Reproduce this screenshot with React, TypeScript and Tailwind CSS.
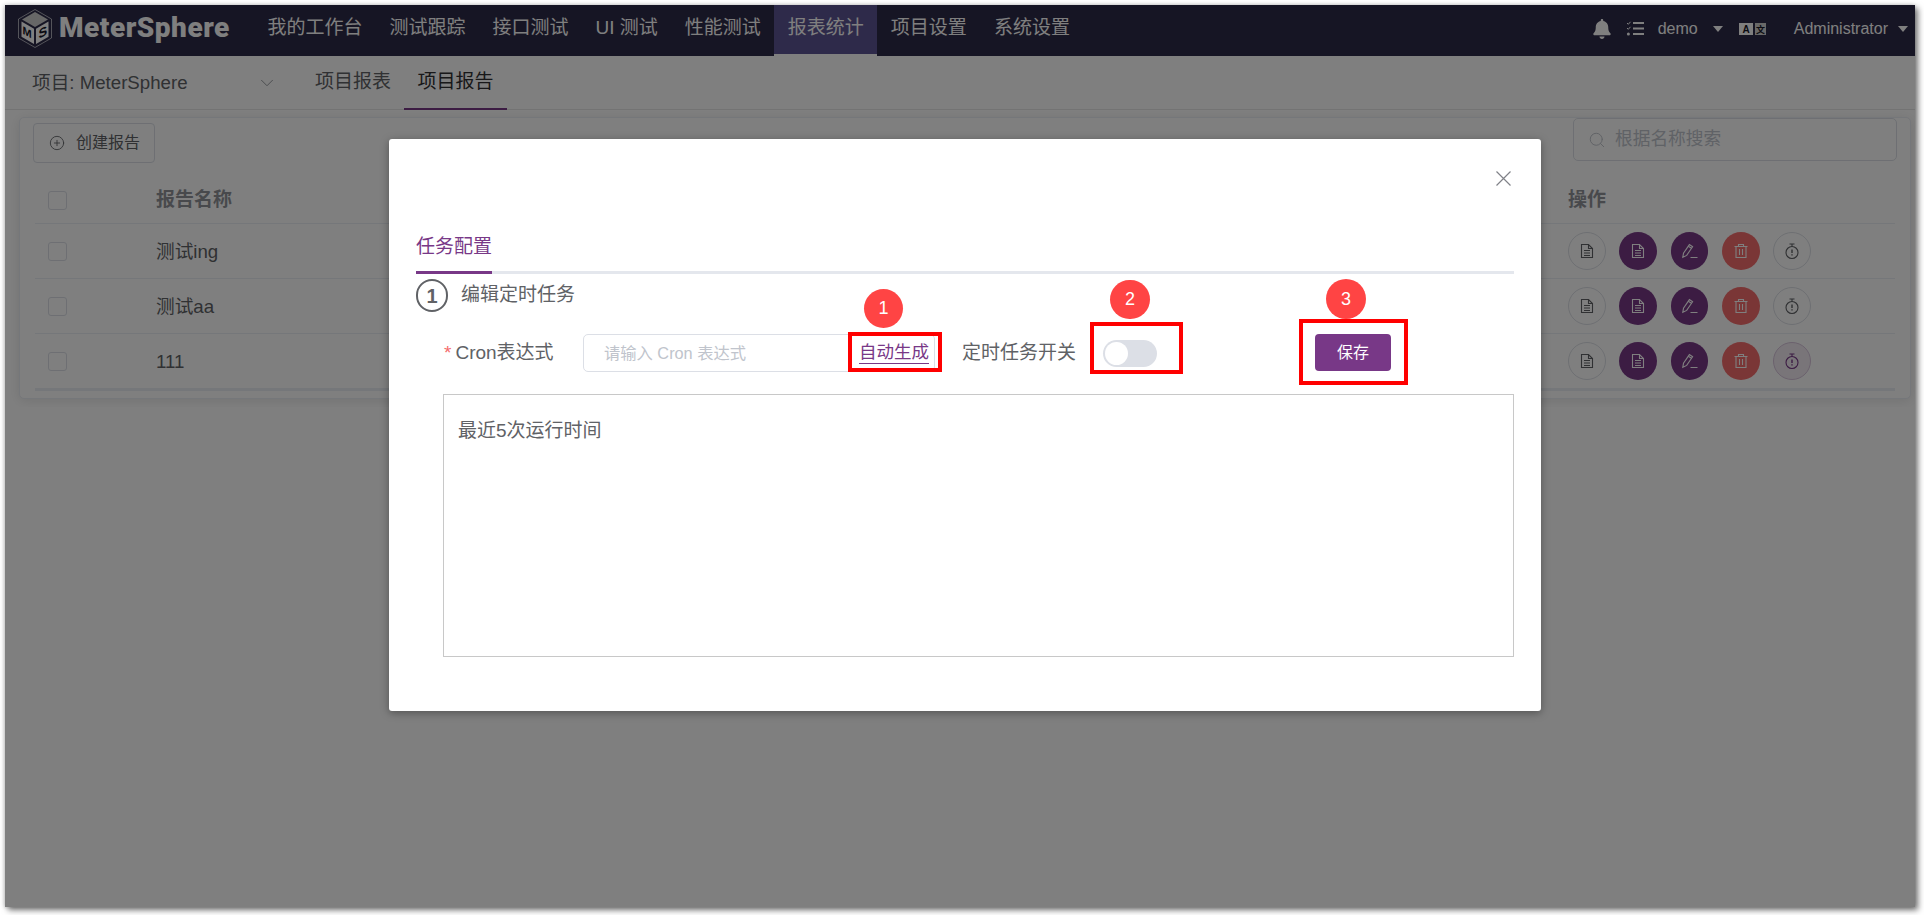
import { ChevronDown, CirclePlus, Search } from "lucide-react";
import { FaBell } from "react-icons/fa";

const NAV_ITEMS = ["我的工作台", "测试跟踪", "接口测试", "UI 测试", "性能测试", "报表统计", "项目设置", "系统设置"];
const ROWS = ["测试ing", "测试aa", "111"];
const FONT = "font-['Liberation_Sans','Noto_Sans_CJK_SC',sans-serif]";

function Logo() {
  return (
    <svg width="34" height="39" viewBox="0 0 34 39" className="shrink-0">
      <polygon points="17,0.5 33.5,10 33.5,29 17,38.5 0.5,29 0.5,10" fill="none" stroke="#ffffff" strokeWidth="0.6" />
      <polygon points="17,3 30,10.5 17,18 4,10.5" fill="#cfcfcf" />
      <polygon points="3.5,12.5 16,19.7 16,35 3.5,27.8" fill="#ffffff" />
      <polygon points="18,19.7 30.5,12.5 30.5,27.8 18,35" fill="#ffffff" />
      <text
        transform="matrix(1 0.55 0 1 4.6 24.5)"
        fontSize="11"
        fontWeight="900"
        fontFamily="Liberation Sans"
        fill="#161524"
      >
        M
      </text>
      <text
        transform="matrix(1 -0.55 0 1 20.5 30)"
        fontSize="13"
        fontWeight="900"
        fontFamily="Liberation Sans"
        fill="#161524"
      >
        S
      </text>
    </svg>
  );
}

function TasksIcon() {
  return (
    <svg width="18" height="15" viewBox="0 0 18 15" fill="none" stroke="#ffffff" className="shrink-0">
      <path d="M1 2l1.3 1.3L4.5 .8M1 7l1.3 1.3L4.5 5.8" strokeWidth="1" />
      <circle cx="2.4" cy="13" r="1.5" fill="#ffffff" stroke="none" />
      <path d="M7 2h11M7 7.5h11M7 13h11" strokeWidth="2" />
    </svg>
  );
}

function LangIcon() {
  return (
    <svg width="27" height="12" viewBox="0 0 27 12" className="shrink-0">
      <rect width="14" height="12" fill="#ffffff" />
      <rect x="16" width="11" height="12" fill="#d0d0d0" />
      <text x="7" y="10" textAnchor="middle" fontSize="10" fontWeight="700" fontFamily="Liberation Sans" fill="#161524">
        A
      </text>
      <text x="21.5" y="9.7" textAnchor="middle" fontSize="9" fontFamily="Noto Sans CJK SC" fontWeight="700" fill="#161524">
        文
      </text>
    </svg>
  );
}

function Caret() {
  return <span className="h-0 w-0 shrink-0 border-x-[5px] border-t-[6px] border-x-transparent border-t-white" />;
}

function DocIcon() {
  return (
    <svg width="16" height="16" viewBox="0 0 16 16" fill="none" stroke="currentColor" strokeWidth="1.1">
      <path d="M2.5 1.5h7l4 4v9h-11z" />
      <path d="M9.5 1.5v4h4M5 7.5h6M5 10h6M5 12.5h6" />
    </svg>
  );
}

function EditIcon() {
  return (
    <svg width="18" height="16" viewBox="0 0 18 16" fill="none" stroke="currentColor" strokeWidth="1.1">
      <path d="M1.8 14.2l.7-3.9L8.4 1.6l3.2 2.1-5.9 8.7z" />
      <path d="M7.3 3.2l3.2 2.1M9.5 14.5h7" />
    </svg>
  );
}

function TrashIcon() {
  return (
    <svg width="16" height="16" viewBox="0 0 16 16" fill="none" stroke="currentColor" strokeWidth="1.1">
      <path d="M1.5 3.5h13M5.5 3.5v-2h5v2M3 3.5v11h10v-11M6.5 6v6M9.5 6v6" />
    </svg>
  );
}

function TimerIcon() {
  return (
    <svg width="16" height="17" viewBox="0 0 16 17" fill="none" stroke="currentColor" strokeWidth="1.1">
      <circle cx="8" cy="9.5" r="6" />
      <path d="M5.5 1h5M8 1v2.5" />
      <path d="M8 6.5v3.5M8 11.2v1.4" strokeWidth="1.4" />
    </svg>
  );
}

function ActionButtons({ hovered }: { hovered: boolean }) {
  return (
    <div className="flex w-[327px] items-center">
      <span className="flex h-[38px] w-[38px] items-center justify-center rounded-full border border-[#dcdfe6] bg-white text-[#606266]">
        <DocIcon />
      </span>
      <span className="ml-[13px] flex h-[38px] w-[38px] items-center justify-center rounded-full bg-[#783887] text-white">
        <DocIcon />
      </span>
      <span className="ml-[14px] flex h-[38px] w-[37px] items-center justify-center rounded-full bg-[#783887] text-white">
        <EditIcon />
      </span>
      <span className="ml-[14px] flex h-[38px] w-[38px] items-center justify-center rounded-full bg-[#f56c6c] text-white">
        <TrashIcon />
      </span>
      {hovered ? (
        <span className="ml-[13px] flex h-[38px] w-[38px] items-center justify-center rounded-full border border-[#d7c3db] bg-[#f2ebf3] text-[#783887]">
          <TimerIcon />
        </span>
      ) : (
        <span className="ml-[13px] flex h-[38px] w-[38px] items-center justify-center rounded-full border border-[#dcdfe6] bg-white text-[#606266]">
          <TimerIcon />
        </span>
      )}
    </div>
  );
}

function Checkbox() {
  return <span className="block h-[19px] w-[19px] shrink-0 rounded-[3px] border border-[#dcdfe6] bg-white" />;
}

function TopNav() {
  return (
    <div className="flex h-[51px] shrink-0 bg-[#2c2a48] text-white">
      <div className="flex w-[249px] shrink-0 items-center gap-[7px] pb-[5px] pl-[13px]">
        <Logo />
        <span className="font-['Roboto',sans-serif] text-[28px] leading-none font-black tracking-[0.5px]">MeterSphere</span>
      </div>
      {NAV_ITEMS.map((item) =>
        item === "报表统计" ? (
          <div key={item} className="flex items-center border-b-2 border-white bg-[#5c5494] px-[13.5px] pb-[2px] text-[19px]">
            {item}
          </div>
        ) : (
          <div key={item} className="flex items-center px-[13.5px] pb-[4px] text-[19px]">
            {item}
          </div>
        ),
      )}
      <div className="ml-auto flex items-center pr-[7px] pb-[4px] text-base">
        <FaBell size={20} className="shrink-0" />
        <span className="ml-[14px] flex">
          <TasksIcon />
        </span>
        <span className="ml-[14px]">demo</span>
        <span className="ml-[15px] flex">
          <Caret />
        </span>
        <span className="ml-[16px] flex">
          <LangIcon />
        </span>
        <span className="ml-[28px]">Administrator</span>
        <span className="ml-[10px] flex">
          <Caret />
        </span>
      </div>
    </div>
  );
}

function SubNav() {
  return (
    <div className="flex h-[54px] shrink-0 items-stretch border-b border-[#e6e6e6] bg-white text-[19px] text-[#606266]">
      <div className="flex w-[297px] items-center pl-[27px]">
        <span className="text-[18.67px]">项目: MeterSphere</span>
        <ChevronDown size={22} strokeWidth={1} className="mr-[24px] ml-auto text-[#909399]" />
      </div>
      <div className="flex items-center px-[13px]">项目报表</div>
      <div className="-mb-px flex items-center border-b-2 border-[#783887] px-[13.5px] text-[#303133]">项目报告</div>
    </div>
  );
}

function ReportCard() {
  return (
    <div className="min-h-0 flex-1">
      <div className="h-[297px] overflow-hidden pt-[7px] pr-[4px] pb-[8px] pl-[14px]">
        <div className="h-[282px] rounded-[5px] border border-[#ebeef5] bg-white shadow-[0_2px_12px_0_rgba(0,0,0,0.1)]">
          <div className="flex h-[45px] justify-between pr-[13px] pl-[13px]">
            <button className="mt-[5px] flex h-[40px] w-[122px] items-center rounded-[4px] border border-[#dcdfe6] pl-[15px] text-base text-[#606266]">
              <CirclePlus size={16} strokeWidth={1.3} />
              <span className="ml-[11px]">创建报告</span>
            </button>
            <div className="flex h-[43px] w-[324px] items-center rounded-[5px] border border-[#dcdfe6] pl-[14px]">
              <Search size={18} strokeWidth={1.3} className="shrink-0 text-[#c0c4cc]" />
              <input
                placeholder="根据名称搜索"
                className="ml-[9px] min-w-0 flex-1 text-[17.7px] outline-none placeholder:text-[#c0c4cc]"
              />
            </div>
          </div>
          <div className="mx-[15px]">
            <div className="flex h-[61px] items-center border-b border-[#ebeef5] pt-[15px] pl-[13px] text-[19px] font-bold text-[#909399]">
              <Checkbox />
              <span className="ml-[89px]">报告名称</span>
              <span className="ml-auto w-[327px]">操作</span>
            </div>
            {ROWS.map((name, i) => (
              <div key={name} className="flex h-[55px] items-center border-b border-[#ebeef5] pl-[13px] text-[18.67px] text-[#606266]">
                <Checkbox />
                <span className="mt-[2px] ml-[89px]">{name}</span>
                <span className="ml-auto">
                  <ActionButtons hovered={i === 2} />
                </span>
              </div>
            ))}
            <div className="h-[2px] bg-[#ebeef5]" />
          </div>
        </div>
      </div>
    </div>
  );
}

function ScheduleDialog() {
  return (
    <div className="absolute top-[134px] left-[384px] h-[572px] w-[1152px] rounded-[3px] bg-white px-[27px] pt-[85px] shadow-[0_2px_8px_rgba(0,0,0,0.35)]">
      <svg width="15" height="15" viewBox="0 0 15 15" className="absolute top-[32px] right-[30px] text-[#808288]" stroke="currentColor" strokeWidth="1.2" fill="none">
        <path d="M.5.5l14 14M14.5.5l-14 14" />
      </svg>
      <div className="flex h-[50px] border-b-[3px] border-[#e4e7ed]">
        <div className="flex h-[50px] items-center border-b-[3px] border-[#783887] pb-[1px] text-[19px] text-[#783887]">任务配置</div>
      </div>
      <div className="mt-[5px] flex h-[33px] items-center">
        <span className="flex h-[33px] w-[32px] items-center justify-center rounded-full border-2 border-[#606266] text-[20px] font-bold text-[#606266]">
          1
        </span>
        <span className="mb-[1px] ml-[13px] text-[19px] text-[#606266]">编辑定时任务</span>
      </div>
      <div className="mt-[22px] ml-[28px] flex h-[38px] items-center text-[19px] text-[#606266]">
        <span className="flex w-[139px] items-center">
          <span className="mr-[4px] text-[#f56c6c]">*</span>
          <span>Cron表达式</span>
        </span>
        <div className="flex h-[38px] w-[352px] items-center rounded-[5px] border border-[#dcdfe6] pr-[5px] pl-[20px]">
          <input placeholder="请输入 Cron 表达式" className="min-w-0 flex-1 text-[16.3px] outline-none placeholder:text-[#c0c4cc]" />
          <a className="mb-[2px] border-b border-[#783887] text-[17.5px] leading-[22px] text-[#783887]">自动生成</a>
        </div>
        <span className="ml-[27px] w-[114px] shrink-0 text-[19px]">定时任务开关</span>
        <span className="ml-[27px] flex h-[27px] w-[54px] shrink-0 items-center rounded-full bg-[#dcdfe6] pl-[2px]">
          <span className="h-[23px] w-[23px] rounded-full bg-white" />
        </span>
        <button className="ml-[158px] h-[37px] w-[76px] shrink-0 self-start rounded-[4px] bg-[#783887] text-base text-white">保存</button>
      </div>
      <div className="mt-[22px] ml-[27px] h-[263px] border border-[#c8c8c8] pt-[23px] pl-[14px] text-[19px] leading-[26px] text-[#606266]">
        最近5次运行时间
      </div>
    </div>
  );
}

function Annotations() {
  return (
    <>
      <div className="absolute top-[327px] left-[843px] h-[40px] w-[94px] border-4 border-[#ff0000]" />
      <div className="absolute top-[317px] left-[1085px] h-[52px] w-[93px] border-4 border-[#ff0000]" />
      <div className="absolute top-[314px] left-[1294px] h-[66px] w-[109px] border-4 border-[#ff0000]" />
      <div className="absolute top-[284px] left-[859px] flex h-[39px] w-[39px] items-center justify-center rounded-full bg-[#ff4444] text-[18px] text-white">1</div>
      <div className="absolute top-[275px] left-[1105px] flex h-[39px] w-[40px] items-center justify-center rounded-full bg-[#ff4444] text-[18px] text-white">2</div>
      <div className="absolute top-[274px] left-[1321px] flex h-[40px] w-[40px] items-center justify-center rounded-full bg-[#ff4444] text-[18px] text-white">3</div>
    </>
  );
}

export default function App() {
  return (
    <div className={`h-[915px] w-[1924px] overflow-hidden bg-white pt-[5px] pr-[9px] pb-[8px] pl-[5px] ${FONT}`}>
      <div className="relative flex h-[902px] w-[1910px] flex-col overflow-hidden bg-white shadow-[3px_3px_6px_rgba(0,0,0,0.55),-1px_0_4px_rgba(0,0,0,0.2)]">
        <TopNav />
        <SubNav />
        <ReportCard />
        <div className="absolute inset-0 bg-black/50" />
        <ScheduleDialog />
        <Annotations />
      </div>
    </div>
  );
}
